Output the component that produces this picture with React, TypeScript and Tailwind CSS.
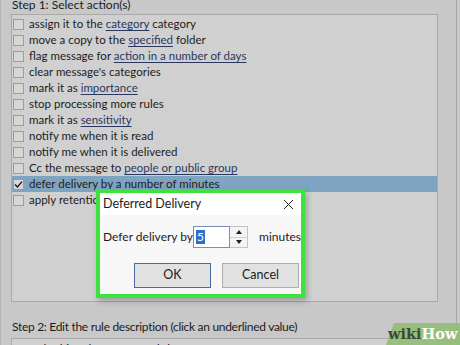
import React from "react";

const L = ({ children }: { children: React.ReactNode }) => (
  <span className="underline decoration-[1px] underline-offset-[2px] text-[#2a3760]">{children}</span>
);

const rows: React.ReactNode[] = [
  <>assign it to the <L>category</L> category</>,
  <>move a copy to the <L>specified</L> folder</>,
  <>flag message for <L>action in a number of days</L></>,
  <>clear message's categories</>,
  <>mark it as <L>importance</L></>,
  <>stop processing more rules</>,
  <>mark it as <L>sensitivity</L></>,
  <>notify me when it is read</>,
  <>notify me when it is delivered</>,
  <>Cc the message to <L>people or public group</L></>,
  <>defer delivery by a number of minutes</>,
  <>apply retention policy</>,
];

export default function App() {
  return (
    <div
      className="relative w-[460px] h-[345px] overflow-hidden bg-[#c8c8c8] text-[#1c1c1c]"
      style={{ fontFamily: 'Lato, "Open Sans", sans-serif' }}
    >
      <div className="absolute left-0 top-0 h-full w-[1px] bg-[#b4b4b4]" />
      <div className="absolute left-[456px] top-0 h-full w-[1px] bg-[#a8a8a8]" />
      <div className="flex flex-col pl-[11px] w-[438px]">
        <div className="h-[14px] -mt-[2px] pl-[1px] text-[12px] leading-[14px] whitespace-nowrap">Step 1: Select action(s)</div>
        <div className="mt-[2px] h-[288px] border border-[#a9a9a9] bg-[#d0d0d0] pt-[1px] flex flex-col">
          {rows.map((r, i) => {
            const sel = i === 10;
            return (
              <div
                key={i}
                className={`h-[16px] flex items-center text-[11.5px] leading-[16px] whitespace-nowrap ${sel ? "bg-[#7fa4c2]" : ""}`}
              >
                <div className="ml-[1px] w-[11px] h-[11px] border border-[#9c9c9c] bg-[#d6d6d6] flex items-center justify-center">
                  {sel && (
                    <svg width="9" height="9" viewBox="0 0 9 9">
                      <path d="M1 4.6 L3.4 7 L8 1.6" fill="none" stroke="#1a1a1a" strokeWidth="1.4" />
                    </svg>
                  )}
                </div>
                <span className="ml-[5px]">{r}</span>
              </div>
            );
          })}
        </div>
        <div className="mt-[18px] pl-[1px] h-[14px] text-[12px] leading-[14px] tracking-[-0.3px] whitespace-nowrap">
          Step 2: Edit the rule description (click an underlined value)
        </div>
        <div className="mt-[4px] h-[30px] border border-[#a9a9a9] bg-[#d0d0d0] pl-[10px] pt-[3px] text-[12px] leading-[14px] whitespace-nowrap">
          Apply this rule after I send the message
        </div>
      </div>

      {/* Dialog */}
      <div className="absolute left-[96px] top-[189px] w-[209px] h-[109px] border-[4px] border-[#3ee23e] bg-white shadow-[2px_3px_6px_rgba(0,0,0,0.25)] flex flex-col">
        <div className="h-[22px] bg-white flex items-center justify-between pl-[3px] pr-[7px]">
          <span className="text-[12.5px] whitespace-nowrap">Deferred Delivery</span>
          <svg width="11" height="11" viewBox="0 0 11 11">
            <path d="M1 1 L10 10 M10 1 L1 10" stroke="#222" strokeWidth="1" />
          </svg>
        </div>
        <div className="bg-[#f7f7f7] flex-1 flex flex-col">
          <div className="mt-[11px] flex items-center h-[22px] pl-[3px]">
            <span className="text-[12px] w-[92px] whitespace-nowrap">Defer delivery by</span>
            <div className="w-[38px] h-[22px] border border-[#7a8fb4] bg-white flex items-center pl-[2px]">
              <span className="bg-[#2f6fcc] text-white text-[12px] leading-[14px] px-[1px]">5</span>
            </div>
            <div className="w-[18px] h-[22px] border border-[#c4c4c4] border-l-0 flex flex-col bg-[#f4f4f4]">
              <div className="flex-1 flex items-center justify-center border-b border-[#d0d0d0]">
                <svg width="6" height="4" viewBox="0 0 6 4"><path d="M0 4 L3 0 L6 4Z" fill="#222" /></svg>
              </div>
              <div className="flex-1 flex items-center justify-center">
                <svg width="6" height="4" viewBox="0 0 6 4"><path d="M0 0 L3 4 L6 0Z" fill="#222" /></svg>
              </div>
            </div>
            <span className="ml-[11px] text-[12px] whitespace-nowrap">minutes</span>
          </div>
          <div className="mt-[15px] flex justify-end gap-[11px] pr-[2px]">
            <div className="w-[77px] h-[25px] border-[1.5px] border-[#4a6aa4] bg-[#e1e1e1] flex items-center justify-center text-[12.5px]">
              OK
            </div>
            <div className="w-[77px] h-[25px] border border-[#adadad] bg-[#e1e1e1] flex items-center justify-center text-[12.5px]">
              Cancel
            </div>
          </div>
        </div>
      </div>

      {/* wikiHow watermark */}
      <div className="absolute left-[386px] top-[323px] w-[100px] h-[22px] bg-[#90bc74]/90 -skew-x-[20deg] origin-bottom-left" />
      <div
        className="absolute left-[388px] top-[325px] text-[14.5px] font-bold leading-[18px]"
        style={{ fontFamily: '"DejaVu Serif", "Liberation Serif", serif' }}
      >
        <span className="text-[#3d4a3a]">wiki</span>
        <span className="text-white">How</span>
      </div>
    </div>
  );
}
